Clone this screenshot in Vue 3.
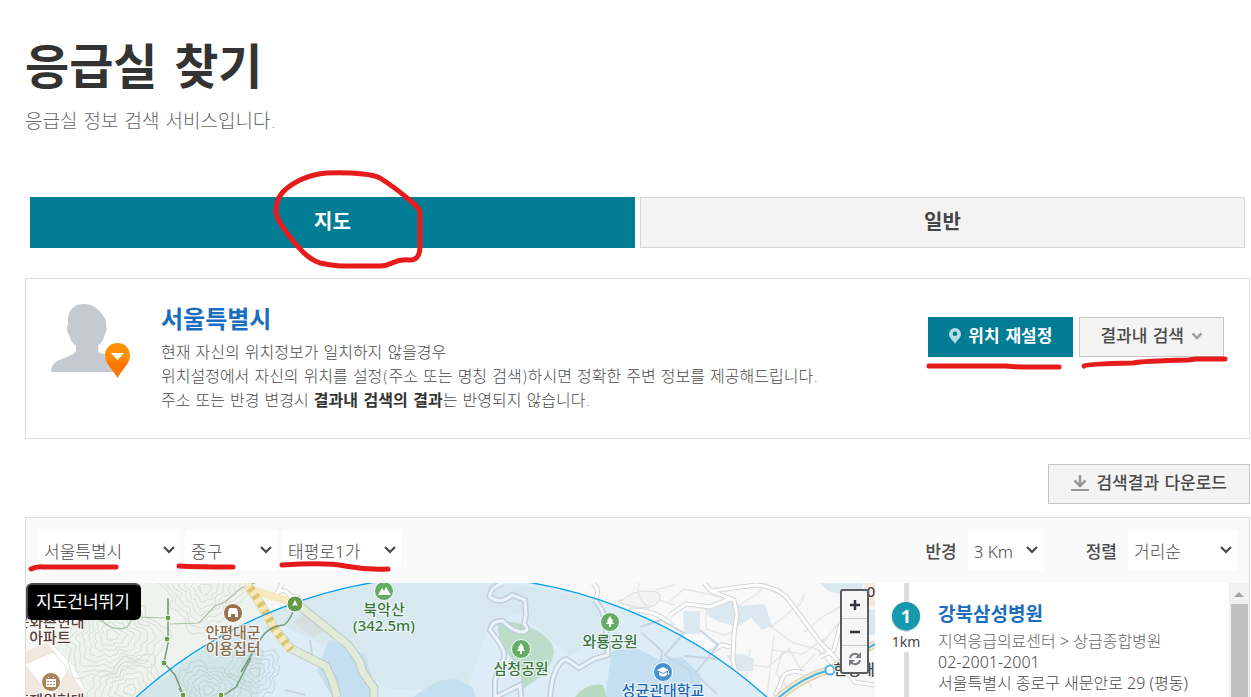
<template>
  <div class="page">
    <header class="page-head">
      <h1>응급실 찾기</h1>
      <p>응급실 정보 검색 서비스입니다.</p>
    </header>

    <nav class="tabs">
      <button
        v-for="tab in tabs"
        :key="tab"
        type="button"
        class="tab"
        :class="{ active: tab === activeTab }"
        @click="activeTab = tab"
      >{{ tab }}</button>
    </nav>

    <section class="location">
      <svg class="avatar" width="80" height="76" viewBox="0 0 80 76" aria-hidden="true">
        <path fill="#c5cad1" d="M33 1c-10 0-16 6-16 16v5c-2 2-1 7 1 9 1 6 4 9 7 12v5c-1 3-7 5-12 7C4 58 0 63 0 68c0 1 1 1 2 1h62V56c-4-3-10-4-14-6-3-1-3-3-3-7 3-3 6-6 7-12 2-3 2-7 1-9v-5C49 7 43 1 33 1z" />
        <defs>
          <linearGradient id="pin" x1="0" y1="0" x2="0" y2="1">
            <stop offset="0.4" stop-color="#ff8f05" />
            <stop offset="0.6" stop-color="#ff7300" />
          </linearGradient>
        </defs>
        <path fill="url(#pin)" d="M66.500 40C59 40 54 45.500 54 52.500c0 8 8 14 12.500 22.500C71 66.500 79 60.500 79 52.500 79 45.500 74 40 66.500 40z" />
        <path fill="#fff" d="M60 50h13l-6.500 7z" />
      </svg>
      <div class="location-text">
        <h2>서울특별시</h2>
        <p>현재 자신의 위치정보가 일치하지 않을경우</p>
        <p>위치설정에서 자신의 위치를 설정(주소 또는 명칭 검색)하시면 정확한 주변 정보를 제공해드립니다.</p>
        <p>주소 또는 반경 변경시 <strong>결과내 검색의 결과</strong>는 반영되지 않습니다.</p>
      </div>
      <div class="location-actions">
        <button type="button" class="btn primary">
          <svg width="12" height="16" viewBox="0 0 12 16" aria-hidden="true">
            <path fill="#b3dbe1" fill-rule="evenodd" d="M6 0a6 6 0 0 0-6 6c0 4 4 6 6 10 2-4 6-6 6-10a6 6 0 0 0-6-6zm0 3.500a2.300 2.300 0 1 1 0 4.600 2.300 2.300 0 0 1 0-4.600z" />
          </svg>
          위치 재설정
        </button>
        <button type="button" class="btn">
          결과내 검색
          <svg width="12" height="8" viewBox="0 0 12 8" aria-hidden="true">
            <path fill="none" stroke="#a0a0a0" stroke-width="2.500" d="M1.500 1.500 6 6l4.500-4.500" />
          </svg>
        </button>
      </div>
    </section>

    <div class="download">
      <button type="button" class="btn">
        <svg width="18" height="18" viewBox="0 0 18 18" aria-hidden="true">
          <path fill="none" stroke="#999" stroke-width="2.500" d="M9 1v11M3.500 6.500 9 12l5.500-5.500" />
          <path fill="#999" d="M0 15h18v2H0z" />
        </svg>
        검색결과 다운로드
      </button>
    </div>

    <section class="finder">
      <div class="filters">
        <select v-model="city" class="city" aria-label="시/도"><option>서울특별시</option></select>
        <select v-model="district" class="district" aria-label="시/군/구"><option>중구</option></select>
        <select v-model="town" class="town" aria-label="읍/면/동"><option>태평로1가</option></select>
        <label class="radius-label" for="radius">반경</label>
        <select id="radius" v-model="radius" class="radius"><option>3 Km</option></select>
        <label class="sort-label" for="sort">정렬</label>
        <select id="sort" v-model="sort" class="sort"><option>거리순</option></select>
      </div>

      <div class="finder-body">
        <div class="map">
          <svg class="map-canvas" viewBox="26 583 849 114" preserveAspectRatio="xMinYMin slice">
            <rect x="25" y="583" width="900" height="500" fill="#f8f8f8" />
            <path fill="#eff3ef" d="M60 583h195l14 25 30 89H66l-5-40-20-37z" />
            <!-- residential blocks -->
            <path fill="#f1e9df" d="M25 652l22-10 30 28 8 27H25z" />
            <path fill="#fff" stroke="#e2e2e2" d="M25 664l28-12 16 18-18 27M40 632l35 35 13 30" />
            <path fill="#f2f3f2" stroke="#ddd" d="M623 600q8-9 25-9t11 10-28 5-8-6z" />
            <!-- contour lines -->
            <g fill="none" stroke="#ccdacb" stroke-width="0.800">
              <path v-for="(d, i) in contours" :key="i" :d="d" />
            </g>
            <g fill="none" stroke="#a7c39f" stroke-width="1.200">
              <path d="M100 619q14 14 27 8l7-10 34 1v-18M170 624l29-1 16-17 10-4 16-14 14-5" />
            </g>
            <!-- shaded blocks, upper right -->
            <g fill="#dce8f0">
              <path d="M683 611h17v23h-16zM707 605l25-9 8 10 25-2 7 22-10 4-11-12-14 9-20-6-11-7zM726 655l16-1 12 4-1 13h-16zM820 583h43l-2 14-15-1-18-5zM750 583l10 5 8-5zM862 610h13v25h-13z" />
            </g>
            <path fill="#f5eadb" d="M864 583h11v24h-11z" />
            <!-- minor streets -->
            <g fill="none" stroke="#e6e6e6" stroke-width="1.500">
              <path d="M669 602l15-13 42 9 12 6M706 609v20l18 6 12-4M740 605l18-12 9-9M771 627l30-24 4-10M771 627l22 16 24 6 21 25M774 635l-7 62M752 665l16 2 21-18 23 39M772 650l30 4 27-18M750 650l-7 47M804 632l18-15 18-10M820 646l18-22 22-16 8-25M783 651l-7 22 16 20M799 671l16-17" />
              <path d="M640 583q-5 10 4 20l9 12 22 10M655 590l20-5M659 600l16 5" />
            </g>
            <g fill="none" stroke="#d2d4d6" stroke-width="5"><path :d="cityRoads" /></g>
            <g fill="none" stroke="#fff" stroke-width="3"><path :d="cityRoads" /></g>

            <!-- search radius area -->
            <circle cx="451.500" cy="1047" r="471" fill="#dcedf7" />
            <path fill="#d7e9ee" d="M262 615q60-28 130-33h80q70 0 133 24l-7 33-28 17-51-43-29 9-10 29-13 38h-78l-72-47-26-12z" />
            <path fill="#d2e6ea" d="M166 677q46-36 83-54l15 29-6 45H137z" />
            <path fill="#c4dff0" d="M329 640l36 14 7 24 4 19h-44l-15-27zM413 697l24-16 20-2 15 8 4 10zM605 697l7-46 23-4 25 13 22-3 19 18-1 22z" />
            <path fill="#bcdbc9" d="M497 621l17 1 13 4q25 10 27 25-1 14-15 27l-16 11-4-21-19-25z" />
            <path fill="#b7d9bf" d="M575 697q12-15 28-12l4 12z" />
            <path fill="#d5dfdf" d="M293 622l12-9 21 17-12 8z" />
            <g fill="none" stroke="#b6cfc9" stroke-width="0.800">
              <path v-for="(d, i) in innerContours" :key="i" :d="d" />
            </g>
            <g fill="none" stroke="#c6d5e1" stroke-width="2">
              <path d="M640 627l21-7 23 13-19 22 24 15 8 27M642 633l20 18-2 20M700 630l18 15-23 29 22 20M684 656l35 3M285 690l20 5M310 640l3 20" />
            </g>
            <g fill="none" stroke="#becedb" stroke-width="6"><path :d="parkRoads" /></g>
            <g fill="none" stroke="#eaf3f8" stroke-width="3"><path :d="parkRoads" /></g>
            <!-- tunnel and main road -->
            <path fill="none" stroke="#bdc7bc" stroke-width="9" d="M247 585q15 19 27 43l16 20 36 18 7 16 4 15M296 603l52 42 12 17 2 9 12 17v9" />
            <path fill="none" stroke="#e1ebd8" stroke-width="7" d="M247 585q15 19 27 43l16 20 36 18 7 16 4 15M296 603l52 42 12 17 2 9 12 17v9" />
            <path fill="none" stroke="#f7e9bd" stroke-width="8" d="M247 585q15 19 27 43l17 22M252 590l43 13" />
            <path fill="none" stroke="#d9c870" stroke-width="8" stroke-dasharray="4 5" d="M250 588q13 17 25 42l16 20" />
            <path fill="none" stroke="#739c7a" stroke-width="1.500" d="M294 605q-1 13-10 20-17 1-25 17l-18 30M168 598v45l-4 20 11 12 9 22M221 697l15-10 15-29M184 697l-5-9" />
            <g fill="#6d9d45"><circle v-for="p in trail" :key="p[0]" :cx="p[0]" :cy="p[1]" r="3" stroke="#fff" /></g>
            <path fill="none" stroke="#cfc6a5" stroke-width="8" d="M777 699q25-22 52-29l12-7 34-19" />
            <path fill="none" stroke="#f2e8ce" stroke-width="6" d="M777 699q25-22 52-29l12-7 34-19" />
            <path fill="none" stroke="#42b5e6" stroke-width="2" d="M777 699q25-22 52-29l12-7 34-19" />
            <circle cx="451.500" cy="1047" r="471" fill="none" stroke="#06a1eb" stroke-width="1.300" />
            <circle cx="830" cy="670" r="4.500" fill="#fff" stroke="#42b5e6" stroke-width="2" />

            <!-- place markers -->
            <g stroke="#fff">
              <circle cx="233" cy="613" r="9.500" fill="#9a704e" />
              <circle cx="51" cy="682" r="9.500" fill="#a9865a" />
              <circle cx="295" cy="604" r="8" fill="#659a47" />
              <circle cx="384" cy="591" r="9.500" fill="#65ad64" />
              <circle cx="521" cy="649" r="9.500" fill="#65ad64" />
              <circle cx="610" cy="622" r="9.500" fill="#65ad64" />
              <circle cx="663" cy="672" r="9.500" fill="#4790d2" />
            </g>
            <g fill="#fff">
              <path d="M228 612l1-2h-1l2-2h6l2 2h-1l1 2v5h-3v-3h-4v3h-3z" />
              <path fill-rule="evenodd" d="M46 679h10v8H46zm1 2v1h2v-1zm3 0v1h2v-1zm3 0v1h2v-1zm-6 3v1h2v-1zm3 0v1h2v-1zm3 0v1h2v-1zM48 677h1v1h-1zM53 677h1v1h-1z" />
              <path d="M295 600l3 6-3-1-3 1z" />
              <path d="M378 595l4-7 2 3 2-4 5 8z" />
              <path d="M521 643l3 5h-1l2 3h-3v3h-2v-3h-3l2-3h-1zM610 616l3 5h-1l2 3h-3v3h-2v-3h-3l2-3h-1z" />
              <path d="M657 670l6-3 6 3-6 3zM659 672l4 2 4-2v3q-4 3-8 0zM668 671h1v4h-1z" />
            </g>

            <g class="place" text-anchor="middle">
              <text x="50" y="627" fill="#5b4039">문화촌현대</text>
              <text x="50" y="643" fill="#5b4039">아파트</text>
              <text x="50" y="706" fill="#5b4039">홍제원현대</text>
              <text x="233" y="638" fill="#8a6a4c">안평대군</text>
              <text x="233" y="654" fill="#8a6a4c">이용집터</text>
              <text x="384" y="615" fill="#37773c">북악산</text>
              <text x="384" y="631" fill="#37773c">(342.5m)</text>
              <text x="521" y="674" fill="#37773c">삼청공원</text>
              <text x="610" y="647" fill="#37773c">와룡공원</text>
              <text x="663" y="696" fill="#1b69b6">성균관대학교</text>
              <text x="871" y="597" fill="#5b4039">0</text>
              <text x="868" y="675" fill="#444">한성대입구</text>
            </g>
          </svg>

          <a class="skip-map" href="#results">지도건너뛰기</a>

          <div class="zoom">
            <button type="button" aria-label="확대">
              <svg width="12" height="12" viewBox="0 0 12 12"><path stroke="#34363f" stroke-width="2.500" d="M1 6h10M6 1v10" /></svg>
            </button>
            <button type="button" aria-label="축소">
              <svg width="12" height="12" viewBox="0 0 12 12"><path stroke="#34363f" stroke-width="2.500" d="M1 6h10" /></svg>
            </button>
            <button type="button" aria-label="새로고침">
              <svg width="14" height="14" viewBox="0 0 14 14">
                <path fill="none" stroke="#7b7c82" stroke-width="2" d="M2 6a5 5 0 0 1 9-2M12 8a5 5 0 0 1-9 2" />
                <path fill="#7b7c82" d="M13 0v6H7zM1 14V8h6z" />
              </svg>
            </button>
          </div>
        </div>

        <div id="results" class="results">
          <ol>
            <li v-for="(item, i) in hospitals" :key="item.name">
              <div class="rail">
                <span class="number">{{ i + 1 }}</span>
                <span class="distance">{{ item.distance }}</span>
              </div>
              <div class="hospital">
                <h3><a href="#results">{{ item.name }}</a></h3>
                <p class="kind">{{ item.kind }}</p>
                <p>{{ item.phone }}</p>
                <p>{{ item.address }}</p>
              </div>
            </li>
          </ol>
          <div class="scrollbar" aria-hidden="true">
            <span class="scroll-up"></span>
            <span class="scroll-thumb"></span>
          </div>
        </div>
      </div>
    </section>

    <!-- hand-drawn highlights -->
    <svg class="marks" width="1251" height="697" viewBox="0 0 1251 697" aria-hidden="true">
      <g fill="none" stroke="#e71b1b" stroke-width="5" stroke-linecap="round" stroke-linejoin="round">
        <path d="M409 260Q420 261 420 246V213Q420 209 413 203 396 188 380 178 374 175 363 174 345 172 327 173 313 174 300 180 288 186 282 193 276 200 276 212 277 220 287 233 294 243 303 252 311 260 320 263 329 265 340 266H380Q386 266 392 263 401 259 409 260" />
        <path d="M929 366h77q8 1 16 1h37" />
        <path d="M1084 366q2-2 49-3 10-2 55-3l8-1h29" />
        <path d="M31 569q6-3 12-2h73" />
        <path d="M179 566q16 1 54 1" />
        <path d="M282 565q45-3 63 1 21 4 43 3" />
      </g>
    </svg>
  </div>
</template>

<script setup>
import { ref } from 'vue'

const tabs = ['지도', '일반']
const activeTab = ref('지도')

const city = ref('서울특별시')
const district = ref('중구')
const town = ref('태평로1가')
const radius = ref('3 Km')
const sort = ref('거리순')

const hospitals = [
  {
    name: '강북삼성병원',
    distance: '1km',
    kind: '지역응급의료센터 > 상급종합병원',
    phone: '02-2001-2001',
    address: '서울특별시 종로구 새문안로 29 (평동)'
  }
]

const trail = [[168, 618], [167, 639], [164, 663], [183, 695], [221, 695]]

const cityRoads = 'M704 583l7 8 23 9 3 14-3 20-1 26 9 37M711 591l45-6q25 2 35 18l28 38 19 20 M838 661l17 21 20 3M820 657l14-7 7-27M730 599l-20 8-24-3-16 11M731 647l-9-2-17 11-14 35M775 697l9-22q9-6 20-2M593 583q8 8 2 17l7 14 20 5 10-9q22 0 38 13M276 597l6-14M270 599q14-15 20-3 13-1 11 13'
const parkRoads = 'M503 583q-14 5-13 14 10 8 22-2l13 5 1 15-2 9q7 7-2 8-10-1-19-11-11-1-13 9 16 20 14 27l-9 23v17M595 600l7 10q5 16 6 45l-14 4-15 9-13-9q-13 5-16 38M496 697l24-12 1 12'

// wavy closed rings around a hill top
function rings(cx, cy, count, step, phase) {
  const list = []
  for (let n = 1; n <= count; n++) {
    let d = ''
    for (let k = 0; k <= 72; k++) {
      const a = (k / 72) * Math.PI * 2
      const r = n * step * (1 + 0.16 * Math.sin(a * 3 + phase) + 0.09 * Math.sin(a * 8 + phase * 2) + 0.04 * Math.sin(a * 17 + n))
      d += `${k ? 'L' : 'M'}${Math.round(cx + r * Math.cos(a))} ${Math.round(cy + r * 0.9 * Math.sin(a))}`
    }
    list.push(d)
  }
  return list
}

const contours = [...rings(112, 635, 8, 6, 1), ...rings(205, 589, 7, 6, 3), ...rings(130, 690, 6, 6, 5)]
const innerContours = [...rings(208, 690, 6, 5, 2), ...rings(255, 672, 5, 5, 4)]
</script>

<style>
body {
  margin: 0;
  background: #fff;
  overflow: hidden;
}
</style>

<style scoped>
.page {
  position: relative;
  display: flex;
  flex-direction: column;
  box-sizing: border-box;
  height: 100vh;
  padding: 33px 1px 0 25px;
  overflow: hidden;
  color: #4a4a4a;
  font-family: "Noto Sans", "Noto Sans CJK KR", sans-serif;
  font-size: 16px;
  line-height: 24px;
}

.page-head, .location, .download {
  font-family: "DejaVu Sans", "Noto Sans CJK KR", sans-serif;
}

h1, h2, h3, p, ol {
  margin: 0;
  padding: 0;
  font-weight: inherit;
}

button, select {
  font: inherit;
  color: inherit;
}

.page-head h1 {
  color: #333;
  font-size: 48px;
  font-weight: 700;
  line-height: 68px;
}

.page-head p {
  margin-top: 4px;
  color: #666;
  font-size: 19px;
  font-weight: 300;
  line-height: 32px;
}

.tabs {
  display: flex;
  gap: 5px;
  margin: 60px 5px 30px;
}

.tab {
  flex: 1;
  height: 51px;
  padding: 0 0 2px;
  border: 1px solid #d6d6d6;
  background: #f4f4f4;
  color: #444;
  font-size: 20px;
  font-weight: 700;
}

.tab.active {
  border-color: #007c95;
  background: #007c95;
  color: #fff;
}

.location {
  display: flex;
  align-items: flex-start;
  padding: 24px 25px;
  border: 1px solid #ddd;
}

.location-text {
  flex: 1;
  margin-left: 30px;
  padding-bottom: 1px;
  font-weight: 300;
}

.location-text h2 {
  margin-bottom: 4px;
  color: #1a6dbf;
  font-size: 24px;
  font-weight: 700;
  line-height: 34px;
}

.location-text strong {
  color: #333;
  font-weight: 700;
}

.location-actions {
  display: flex;
  gap: 6px;
  margin-top: 14px;
}

.btn {
  display: flex;
  align-items: center;
  gap: 7px;
  height: 40px;
  padding: 0 20px 2px;
  border: 1px solid #c6c6c6;
  background: #f4f4f4;
  font-size: 17px;
  font-weight: 500;
  white-space: nowrap;
}

.btn.primary {
  border-color: #007c95;
  background: #007c95;
  color: #fff;
  font-weight: 700;
}

.download {
  display: flex;
  justify-content: flex-end;
  margin: 25px 0 13px;
}

.download .btn {
  padding: 0 22px 2px;
}

.finder {
  display: flex;
  flex: 1;
  flex-direction: column;
  min-height: 0;
  border: 1px solid #ddd;
  border-bottom: 0;
}

.filters {
  display: flex;
  align-items: center;
  gap: 5px;
  padding: 12px 12px 13px;
  background: #fafafa;
  font-size: 17px;
}

select {
  height: 40px;
  padding: 3px 20px 0 6px;
  border: 0;
  border-radius: 0;
  appearance: none;
  background: #fff url("data:image/svg+xml,%3Csvg xmlns='http://www.w3.org/2000/svg' width='12' height='8'%3E%3Cpath d='M1 1l5 5 5-5' fill='none' stroke='%23444' stroke-width='2'/%3E%3C/svg%3E") right 5px center no-repeat;
  font-weight: 300;
}

.city {
  width: 142px;
}

.district {
  width: 92px;
}

.town {
  width: 119px;
}

.radius {
  width: 75px;
  margin-left: 6px;
}

.sort {
  width: 109px;
  margin-left: 6px;
}

.filters label {
  padding-top: 4px;
  font-weight: 500;
}

.radius-label {
  margin-left: auto;
}

.sort-label {
  margin-left: 38px;
}

.finder-body {
  display: flex;
  flex: 1;
  min-height: 0;
}

.map {
  position: relative;
  flex: 1;
  min-width: 0;
  overflow: hidden;
}

.map-canvas {
  display: block;
  width: 100%;
  height: 100%;
}

.place {
  font-size: 15px;
  font-weight: 500;
  paint-order: stroke;
  stroke: rgba(255, 255, 255, 0.8);
  stroke-width: 2px;
}

.skip-map {
  position: absolute;
  top: 0;
  left: 0;
  padding: 5px 9px 4px 8px;
  border: 2px solid #4b4b4d;
  border-color: #4b4b4d #000 #000 #4b4b4d;
  border-radius: 6px;
  background: #000;
  color: #fff;
  font-size: 17px;
  text-decoration: none;
}

.zoom {
  position: absolute;
  top: 6px;
  right: 6px;
  width: 25px;
  border: 2px solid #5b5d63;
  border-radius: 3px;
  background: #f7f7f8;
}

.zoom button {
  display: flex;
  align-items: center;
  justify-content: center;
  width: 100%;
  height: 27px;
  padding: 0;
  border: 0;
  border-top: 1px solid #c9c9cc;
  background: none;
}

.zoom button:first-child {
  border-top: 0;
}

.results {
  display: flex;
  width: 374px;
  overflow: hidden;
}

.results ol {
  flex: 1;
  list-style: none;
}

.results li {
  display: flex;
  height: 100%;
}

.rail {
  display: flex;
  flex-direction: column;
  align-items: center;
  width: 62px;
  padding-top: 19px;
  background: linear-gradient(#ddd, #ddd) center / 5px 100% no-repeat;
}

.number {
  width: 28px;
  height: 28px;
  border-radius: 50%;
  background: #1599ae;
  box-shadow: 0 1px 1px #7bb2bc;
  color: #fff;
  font-size: 18px;
  font-weight: 700;
  line-height: 28px;
  text-align: center;
}

.distance {
  margin-top: 2px;
  background: #fff;
  font-size: 14px;
  line-height: 20px;
}

.hospital {
  padding: 18px 0 0 1px;
  font-weight: 300;
  line-height: 21px;
  white-space: nowrap;
}

.hospital h3 {
  margin-bottom: 4px;
  font-size: 19px;
  font-weight: 700;
  line-height: 26px;
}

.hospital a {
  color: #1a6dbf;
  text-decoration: none;
}

.kind {
  color: #666;
}

.scrollbar {
  display: flex;
  flex-direction: column;
  align-items: center;
  width: 20px;
  background: #f1f1f1;
}

.scroll-up {
  margin: 9px 0 7px;
  border: 5px solid transparent;
  border-top: 0;
  border-bottom-color: #a3a3a3;
}

.scroll-thumb {
  flex: 1;
  width: 17px;
  background: #c1c1c1;
}

.marks {
  position: absolute;
  top: 0;
  left: 0;
  pointer-events: none;
}
</style>
